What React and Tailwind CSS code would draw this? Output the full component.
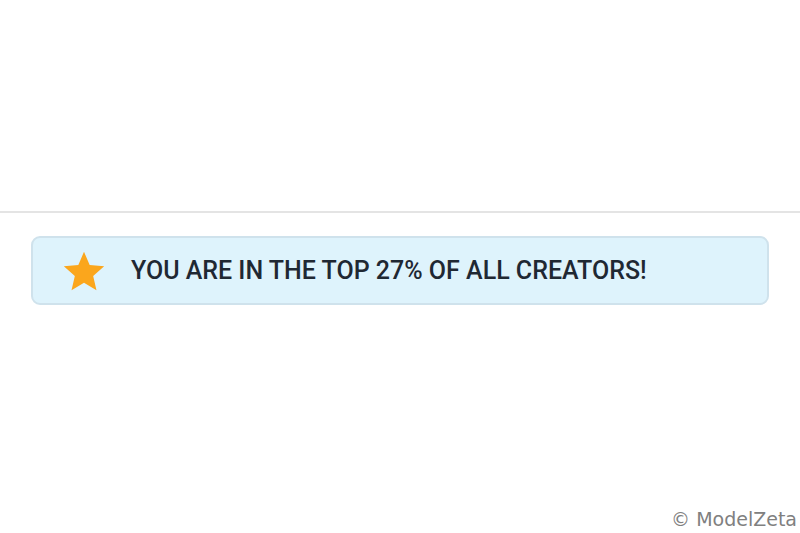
export default function App() {
  return (
    <div className="relative w-[800px] h-[533px] bg-white overflow-hidden" style={{ fontFamily: "Roboto, sans-serif" }}>
      <div className="h-[211px]" />
      <div className="h-[2px] bg-[#e4e4e4]" />
      <div className="px-[31px] pt-[23px]">
        <div className="flex items-center h-[69px] rounded-[9px] border-2 border-[#cfe2ec] bg-[#def3fc]">
          <svg className="ml-[29px] w-[44px] h-[44px]" viewBox="0 0 24 24">
            <path fill="#fba61c" d="M12 1.5l3.09 7.26 7.91.7-6 5.22 1.8 7.82L12 18.4l-6.8 4.1 1.8-7.82-6-5.22 7.91-.7z" />
          </svg>
          <span className="ml-[25px] text-[25px] font-medium text-[#1f2833]">
            YOU ARE IN THE TOP 27% OF ALL CREATORS!
          </span>
        </div>
      </div>
      <div className="absolute right-[3px] bottom-[4px] text-[19px] leading-none text-[#808080]" style={{ fontFamily: "'DejaVu Sans', sans-serif" }}>
        © ModelZeta
      </div>
    </div>
  )
}
